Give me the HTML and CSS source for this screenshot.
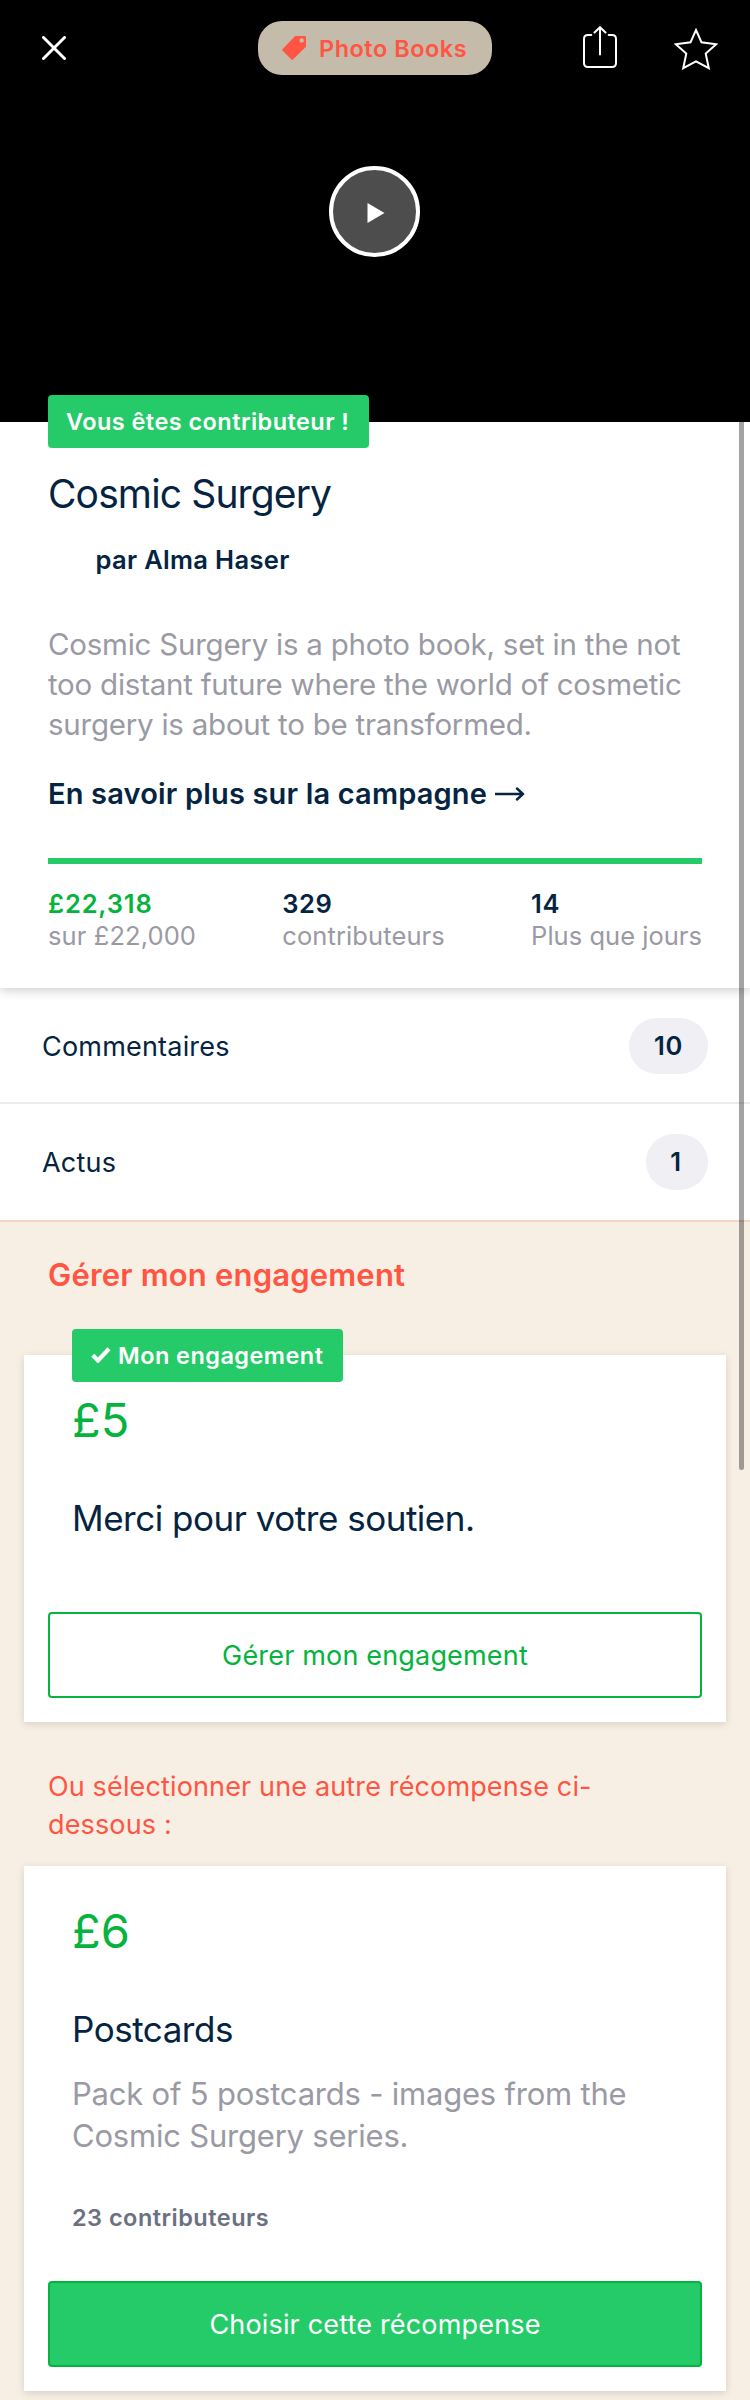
FILE: index.html
```html
<!DOCTYPE html>
<html lang="fr">
<head>
<meta charset="utf-8">
<title>Cosmic Surgery</title>
<link rel="stylesheet" href="styles.css">
</head>
<body>
<main class="page">
  <header class="hero">
    <nav class="toolbar">
      <svg class="icon-close" viewBox="0 0 24 24"><path d="M1.5 1.5l21 21M22.5 1.5l-21 21"/></svg>
      <span class="category">
        <svg class="icon-tag" viewBox="0 0 24 24"><path fill-rule="evenodd" d="M13.2 0H22.8Q24 0 24 1.2V10.8L10.9 23.6Q10.2 24.3 9.5 23.6L.4 14.6Q-.3 13.9.4 13.2ZM19.7 2.2a2.2 2.2 0 1 0 0 4.4a2.2 2.2 0 1 0 0-4.4Z"/></svg>
        <span class="category-name">Photo Books</span>
      </span>
      <svg class="icon-share" viewBox="0 0 34 42"><path d="M8.300 9H5Q1 9 1 13V37Q1 41 5 41H29Q33 41 33 37V13Q33 9 29 9H25.700M17 28.500V1.500M11.500 6.500L17 1.200L22.500 6.500"/></svg>
      <svg class="icon-star" viewBox="0 0 44 42"><path d="M22 2L27.500 14.300L42.200 16.200L31.700 25.600L34.800 40.200L22 33.300L9.200 40.200L12.300 25.600L1.800 16.200L16.500 14.300Z"/></svg>
    </nav>
    <span class="play"><svg class="icon-play" viewBox="0 0 18 20"><path d="M.5 0L17.500 10L.5 20Z"/></svg></span>
  </header>

  <section class="project">
    <span class="badge badge-backer">Vous êtes contributeur !</span>
    <h1 class="title">Cosmic Surgery</h1>
    <p class="author">par Alma Haser</p>
    <p class="blurb">Cosmic Surgery is a photo book, set in the not<br>too distant future where the world of cosmetic<br>surgery is about to be transformed.</p>
    <a class="more">En savoir plus sur la campagne<svg class="icon-arrow" viewBox="0 0 30 14"><path d="M0 7H28M22 1.500L28 7L22 12.500"/></svg></a>
    <div class="progress"></div>
    <div class="stats">
      <div class="stat"><b class="stat-value pledged">£22,318</b><span class="stat-label">sur £22,000</span></div>
      <div class="stat"><b class="stat-value">329</b><span class="stat-label">contributeurs</span></div>
      <div class="stat"><b class="stat-value">14</b><span class="stat-label label-days">Plus que jours</span></div>
    </div>
  </section>

  <section class="links">
    <div class="link-row row-comments"><span class="link-name">Commentaires</span><span class="count">10</span></div>
    <div class="link-row row-updates"><span class="link-name">Actus</span><span class="count">1</span></div>
  </section>

  <section class="rewards">
    <h2 class="rewards-title">Gérer mon engagement</h2>
    <article class="card">
      <span class="badge badge-pledge"><svg class="icon-check" viewBox="0 0 20 16"><path d="M1.800 8.200L7 13.500L18 1.800"/></svg>Mon engagement</span>
      <div class="amount">£5</div>
      <h3 class="reward-name">Merci pour votre soutien.</h3>
      <a class="button button-outline">Gérer mon engagement</a>
    </article>
    <p class="other">Ou sélectionner une autre récompense ci-<br>dessous :</p>
    <article class="card card-plain">
      <div class="amount">£6</div>
      <h3 class="reward-name">Postcards</h3>
      <p class="reward-text">Pack of 5 postcards - images from the<br>Cosmic Surgery series.</p>
      <p class="backers">23 contributeurs</p>
      <a class="button button-solid">Choisir cette récompense</a>
    </article>
  </section>
  <div class="scrollbar"></div>
</main>
</body>
</html>
```
FILE: styles.css
```css
* { box-sizing: border-box; }
body { margin: 0; background: #f7efe4; font-family: Inter, "Liberation Sans", sans-serif; color: #042441; }
h1, h2, h3, p { margin: 0; font-weight: 400; }
svg { display: block; fill: none; flex: none; }

.page { position: relative; width: 750px; height: 2400px; overflow: hidden; }

.hero { height: 422px; background: #000; display: flex; flex-direction: column; align-items: center; }
.toolbar { width: 750px; height: 96px; padding: 0 32px 0 42px; display: flex; align-items: center; }
.icon-close { width: 24px; height: 24px; stroke: #fff; stroke-width: 3; stroke-linecap: round; }
.category { width: 234px; height: 54px; margin-left: 192px; padding-left: 24px; border-radius: 24px; background: #c4bbab; display: flex; align-items: center; gap: 13px; }
.icon-tag { width: 24px; height: 24px; fill: #ff5542; }
.category-name { font-size: 23.5px; font-weight: 600; letter-spacing: .5px; color: #ff5542; white-space: nowrap; }
.icon-share { width: 34px; height: 42px; margin: -2px 0 0 91px; stroke: #fff; stroke-width: 2; stroke-linecap: round; }
.icon-star { width: 44px; height: 42px; margin: 2px 0 0 57px; stroke: #fff; stroke-width: 2; }
.play { width: 91px; height: 91px; margin: 70px 1px 0 0; border: 4px solid #fff; border-radius: 50%; background: #4d4d4d; display: flex; align-items: center; justify-content: center; }
.icon-play { width: 18px; height: 20px; margin: 2px 0 0 2px; fill: #fff; }

.badge { display: flex; align-items: center; width: max-content; height: 53px; border-radius: 4px; background: #25cb68; color: #fff; font-size: 23.5px; font-weight: 600; letter-spacing: .45px; white-space: nowrap; }
.badge-backer { width: 321px; margin-top: -27px; padding-left: 18px; }
.badge-pledge { width: 271px; margin: -26px 0 10px 48px; padding-left: 19px; gap: 7px; }
.icon-check { width: 20px; height: 16px; margin-top: -2px; stroke: #fff; stroke-width: 4.2; }

.project { position: relative; z-index: 1; height: 566px; padding: 0 48px; background: #fff; box-shadow: 0 3px 10px rgba(0, 0, 0, .18); display: flex; flex-direction: column; clip-path: inset(-30px 0 -20px 0); }
.title { margin-top: 22px; font-size: 39px; line-height: 48px; letter-spacing: -.87px; }
.author { margin-top: 26px; padding-left: 47.5px; font-size: 25.5px; font-weight: 600; line-height: 32px; letter-spacing: .33px; }
.blurb { margin-top: 48px; font-size: 29.5px; line-height: 40px; letter-spacing: -.24px; color: #9a9aa4; white-space: nowrap; }
.more { display: flex; align-items: center; gap: 8px; margin-top: 32px; font-size: 29px; font-weight: 600; line-height: 36px; letter-spacing: .17px; white-space: nowrap; }
.icon-arrow { width: 30px; height: 14px; stroke: #042441; stroke-width: 2.4; stroke-linecap: round; }
.progress { height: 6px; margin-top: 46px; background: #25cb68; }
.stats { display: flex; justify-content: space-between; margin-top: 24px; font-size: 25.5px; line-height: 32px; }
.stat { display: flex; flex-direction: column; white-space: nowrap; }
.stat-value { font-weight: 600; letter-spacing: .6px; }
.pledged { letter-spacing: .85px; color: #05b33e; }
.stat-label { letter-spacing: .1px; color: #9a9aa4; }
.label-days { letter-spacing: .03px; }

.link-row { display: flex; justify-content: space-between; align-items: flex-start; padding: 30px 42px 0; background: #fff; font-size: 27px; line-height: 56px; letter-spacing: .2px; }
.link-name { padding-top: 1px; }
.row-comments { height: 116px; border-bottom: 2px solid #ececee; }
.row-updates { height: 118px; border-bottom: 2px solid #f5d3c8; }
.count { min-width: 62px; padding: 0 24px; border-radius: 28px; background: #efeff4; font-size: 25.5px; font-weight: 600; letter-spacing: .6px; text-align: center; }
.row-comments .count { width: 79px; }
.row-updates .count { padding: 0 25px 0 23px; }

.rewards { padding: 33px 24px 0; }
.rewards-title { padding-left: 24px; font-size: 31px; font-weight: 600; line-height: 40px; letter-spacing: .18px; color: #ff5542; }
.card { display: flex; flex-direction: column; height: 367px; margin-top: 60px; padding: 0 24px 24px; background: #fff; box-shadow: 0 2px 8px rgba(0, 0, 0, .13); }
.card-plain { height: 525px; margin-top: 22px; padding-top: 37px; }
.card .badge { margin-left: 24px; }
.amount, .reward-name, .reward-text, .backers { margin-left: 24px; }
.amount { font-size: 47px; line-height: 56px; color: #05b33e; }
.reward-name { margin-top: 48px; font-size: 35px; line-height: 44px; letter-spacing: -.48px; }
.reward-text { margin-top: 22px; font-size: 31px; line-height: 42px; letter-spacing: -.21px; color: #9a9aa4; white-space: nowrap; }
.backers { margin-top: 46px; font-size: 23.5px; font-weight: 600; line-height: 30px; letter-spacing: .48px; color: #6b7180; }
.button { display: flex; align-items: center; justify-content: center; height: 86px; margin-top: auto; border: 2px solid #05b33e; border-radius: 4px; font-size: 27px; letter-spacing: .17px; }
.button-outline { color: #05b33e; }
.button-solid { background: #25cb68; color: #fff; }
.other { margin-top: 46px; padding-left: 24px; font-size: 27px; line-height: 38px; letter-spacing: .14px; color: #ff5542; }

/* overlay scroll indicator */
.scrollbar { position: absolute; z-index: 2; top: 422px; right: 6px; width: 5px; height: 1048px; border-radius: 0 0 3px 3px; background: rgba(0, 0, 0, .36); }
```
